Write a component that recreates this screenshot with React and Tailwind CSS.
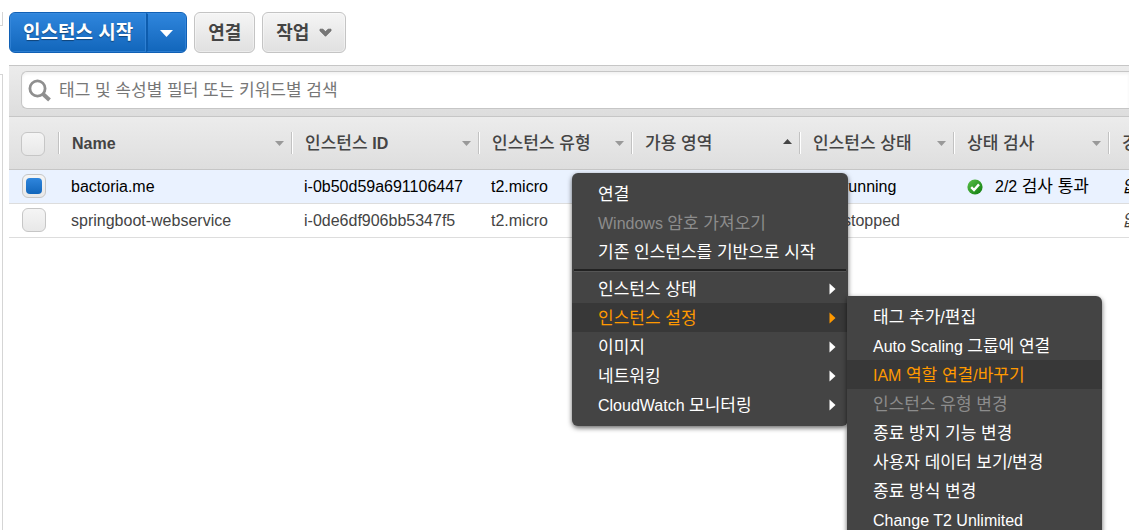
import React from "react";

const CHECKBOX =
  "block h-6 w-6 appearance-none rounded-md border border-[#c6c6c6] bg-linear-to-b from-[#f5f5f5] to-[#e8e8e8]";

const COLUMNS = [
  { label: "Name", width: "w-[233px]", sort: "down" },
  { label: "인스턴스 ID", width: "w-[187px]", sort: "down" },
  { label: "인스턴스 유형", width: "w-[153px]", sort: "down" },
  { label: "가용 영역", width: "w-[168px]", sort: "up" },
  { label: "인스턴스 상태", width: "w-[154px]", sort: "down" },
  { label: "상태 검사", width: "w-[155px]", sort: "down" },
  { label: "경보 상태", width: "", sort: null },
];

const ROWS = [
  { name: "bactoria.me", id: "i-0b50d59a691106447", type: "t2.micro", state: "running", checks: true, selected: true },
  { name: "springboot-webservice", id: "i-0de6df906bb5347f5", type: "t2.micro", state: "stopped", checks: false, selected: false },
];

const MENU = [
  { label: "연결" },
  { label: "Windows 암호 가져오기", disabled: true },
  { label: "기존 인스턴스를 기반으로 시작" },
  { separator: true },
  { label: "인스턴스 상태", sub: true },
  { label: "인스턴스 설정", sub: true, active: true },
  { label: "이미지", sub: true },
  { label: "네트워킹", sub: true },
  { label: "CloudWatch 모니터링", sub: true },
];

const SUBMENU = [
  { label: "태그 추가/편집" },
  { label: "Auto Scaling 그룹에 연결" },
  { label: "IAM 역할 연결/바꾸기", active: true },
  { label: "인스턴스 유형 변경", disabled: true },
  { label: "종료 방지 기능 변경" },
  { label: "사용자 데이터 보기/변경" },
  { label: "종료 방식 변경" },
  { label: "Change T2 Unlimited" },
];

// Hangul runs are set one pixel larger than the Latin text beside them.
function Label({ text, hangul = "" }) {
  return text.split(/([가-힣][가-힣 ]*)/).map((part, i) =>
    i % 2 ? <span key={i} className={`text-[17px] ${hangul}`}>{part}</span> : part
  );
}

function Arrow({ dir, className }) {
  const d = { down: "M0 0h9L4.5 5z", up: "M0 5h9L4.5 0z" }[dir];
  return (
    <svg width="9" height="5" viewBox="0 0 9 5" className={className} aria-hidden="true">
      <path d={d} fill="currentColor" />
    </svg>
  );
}

function Menu({ items, className }) {
  return (
    <ul
      role="menu"
      className={`absolute bg-[#444] pt-1.5 text-white shadow-[0_2px_5px_rgba(0,0,0,0.6)] ${className}`}
    >
      {items.map((item, i) =>
        item.separator ? (
          <li key={i} role="separator" className="mx-0.5 mt-[3px] mb-0.5 h-[3px] border-t-2 border-b border-t-[#222] border-b-[#555]" />
        ) : (
          <li key={i} role="none">
            <button
              role="menuitem"
              disabled={item.disabled}
              className={`flex h-[29px] w-full items-center justify-between pr-3 pl-[26px] text-left whitespace-nowrap ${
                item.active ? "bg-[#383838] text-[#ff9900]" : item.disabled ? "text-[#8c8c8c]" : ""
              }`}
            >
              <span className="pt-0.5">
                <Label text={item.label} />
              </span>
              {item.sub && (
                <svg width="7" height="12" viewBox="0 0 7 12" aria-hidden="true">
                  <path d="M0.5 0.5L6.5 6L0.5 11.5z" fill="currentColor" />
                </svg>
              )}
            </button>
          </li>
        )
      )}
    </ul>
  );
}

function Toolbar() {
  const grey =
    "flex items-center rounded-md border border-[#c4c4c4] bg-linear-to-b from-[#f5f5f5] to-[#e0e0e0] px-[13px] text-lg font-bold text-[#444] shadow-[inset_0_0_0_1px_rgba(255,255,255,0.4)]";
  return (
    <div className="flex h-[41px] gap-[7px]">
      <div className="flex overflow-hidden rounded-md border border-[#1060b5] bg-linear-to-b from-[#2f86dd] to-[#1166bb] text-[19px] font-bold text-white">
        <button className="border border-[#3f8dde]/60 px-3 pt-0.5 [text-shadow:0_1px_1px_rgba(0,0,0,0.4)]">인스턴스 시작</button>
        <button
          aria-label="시작 옵션"
          className="flex w-10 items-center justify-center border border-l-2 border-[#3f8dde]/60 border-l-[#0d5cae]"
        >
          <svg width="13" height="7" viewBox="0 0 13 7" className="mt-0.5" aria-hidden="true">
            <path d="M0 0h13L6.5 7z" fill="currentColor" />
          </svg>
        </button>
      </div>
      <button className={grey}>연결</button>
      <button className={`${grey} gap-2.5`}>
        작업
        <svg width="13" height="9" viewBox="0 0 13 9" aria-hidden="true">
          <path d="M1 1.2h3l2.5 2.6L9 1.2h3v1.6L6.5 8.3L1 2.8z" fill="#777" stroke="#666" strokeWidth=".8" />
        </svg>
      </button>
    </div>
  );
}

function SearchBar() {
  return (
    <div className="border-y border-[#c6c6c6] bg-linear-to-b from-[#ececec] to-[#dddddd] pt-[5px] pb-[7px] pl-3">
      <label className="flex h-[38px] items-center gap-2 rounded-l-md border border-r-0 border-[#c6c6c6] bg-white pl-1.5 shadow-[inset_0_2px_3px_rgba(0,0,0,0.06)]">
        <svg width="23" height="23" viewBox="0 0 23 23" fill="none" stroke="#8f8f8f" aria-hidden="true">
          <circle cx="9.5" cy="9.5" r="7.6" strokeWidth="2.8" />
          <path d="M15 15l6.5 6" strokeWidth="4" />
        </svg>
        <input
          aria-label="검색"
          placeholder="태그 및 속성별 필터 또는 키워드별 검색"
          className="min-w-0 flex-1 bg-transparent pt-0.5 text-[17px] outline-none placeholder:text-[#777]"
        />
      </label>
    </div>
  );
}

function PassedIcon() {
  return (
    <svg width="16" height="16" viewBox="0 0 16 16" aria-hidden="true">
      <defs>
        <linearGradient id="ok" x1="0" y1="0" x2="1" y2="1">
          <stop offset="0" stopColor="#5cc24a" />
          <stop offset="1" stopColor="#0d7a0d" />
        </linearGradient>
      </defs>
      <circle cx="8" cy="8" r="7.6" fill="url(#ok)" />
      <path d="M4.2 8.2l2.8 2.8l5-5.6" fill="none" stroke="#fff" strokeWidth="2.4" />
    </svg>
  );
}

function Instances() {
  return (
    <table className="w-full table-fixed border-separate border-spacing-0 text-left whitespace-nowrap">
      <thead>
        <tr className="h-[53px]">
          <th className="w-[49px] border-b border-[#c6c6c6] bg-linear-to-b from-[#ececec] to-[#dedede] p-0 pt-0.5 pl-3">
            <input type="checkbox" aria-label="모두 선택" className={CHECKBOX} />
          </th>
          {COLUMNS.map((col) => (
            <th
              key={col.label}
              className={`border-b border-[#c6c6c6] bg-linear-to-b from-[#ececec] to-[#dedede] p-0 text-[#444] ${col.width}`}
            >
              <div className="flex h-[22px] items-center justify-between border-l border-[#c2c2c2] pr-[7px] pl-[13px] shadow-[inset_1px_0_0_#fff]">
                <span className="pt-0.5 font-bold">
                  <Label text={col.label} hangul="font-medium" />
                </span>
                {col.sort && <Arrow dir={col.sort} className={col.sort === "up" ? "mb-1 text-[#444]" : "text-[#999]"} />}
              </div>
            </th>
          ))}
        </tr>
      </thead>
      <tbody>
        {ROWS.map((row) => (
          <tr
            key={row.id}
            className={`h-[34px] *:border-b *:border-[#ddd] *:pt-0 *:pr-0 ${
              row.selected ? "bg-[#eaf2ff] text-black" : "text-[#444]"
            }`}
          >
            <td className="pb-0.5 pl-[13px]">
              <span className="grid">
                <input
                  type="checkbox"
                  aria-label={row.name}
                  defaultChecked={row.selected}
                  className={`${CHECKBOX} col-start-1 row-start-1`}
                />
                {row.selected && (
                  <span className="pointer-events-none col-start-1 row-start-1 m-1 size-4 rounded-sm bg-linear-to-b from-[#2f86dd] to-[#1166bb]" />
                )}
              </span>
            </td>
            <td className="pb-0 pl-[13px]">{row.name}</td>
            <td className="pb-0 pl-[13px]">{row.id}</td>
            <td className="pb-0 pl-[13px]">{row.type}</td>
            <td className="p-0" />
            <td className="pb-0 pl-11">{row.state}</td>
            <td className="pb-0 pl-3.5">
              {row.checks && (
                <span className="flex items-center gap-3">
                  <PassedIcon />
                  <span>
                    <Label text="2/2 검사 통과" />
                  </span>
                </span>
              )}
            </td>
            <td className="pb-0 pl-3.5 text-[17px] italic">없음</td>
          </tr>
        ))}
      </tbody>
    </table>
  );
}

export default function App() {
  return (
    <div className="relative flex h-screen gap-1.5 overflow-hidden bg-white font-['Liberation_Sans','Noto_Sans_CJK_KR',sans-serif] text-base">
      <aside className="flex w-[3px] shrink-0 flex-col gap-12 pt-3">
        <div className="h-3.5 border-r border-b border-[#d5d5d5]" />
        <div className="flex-1 border-t border-r border-[#d5d5d5]" />
      </aside>
      <main className="flex min-w-0 flex-1 flex-col pt-3">
        <Toolbar />
        <div className="mt-3">
          <SearchBar />
          <Instances />
        </div>
      </main>
      <Menu items={MENU} className="top-[173px] left-[572px] w-[276px] rounded-md pb-[7px]" />
      <Menu items={SUBMENU} className="top-[296px] left-[847px] w-[255px] rounded-r-md pb-1.5" />
    </div>
  );
}
